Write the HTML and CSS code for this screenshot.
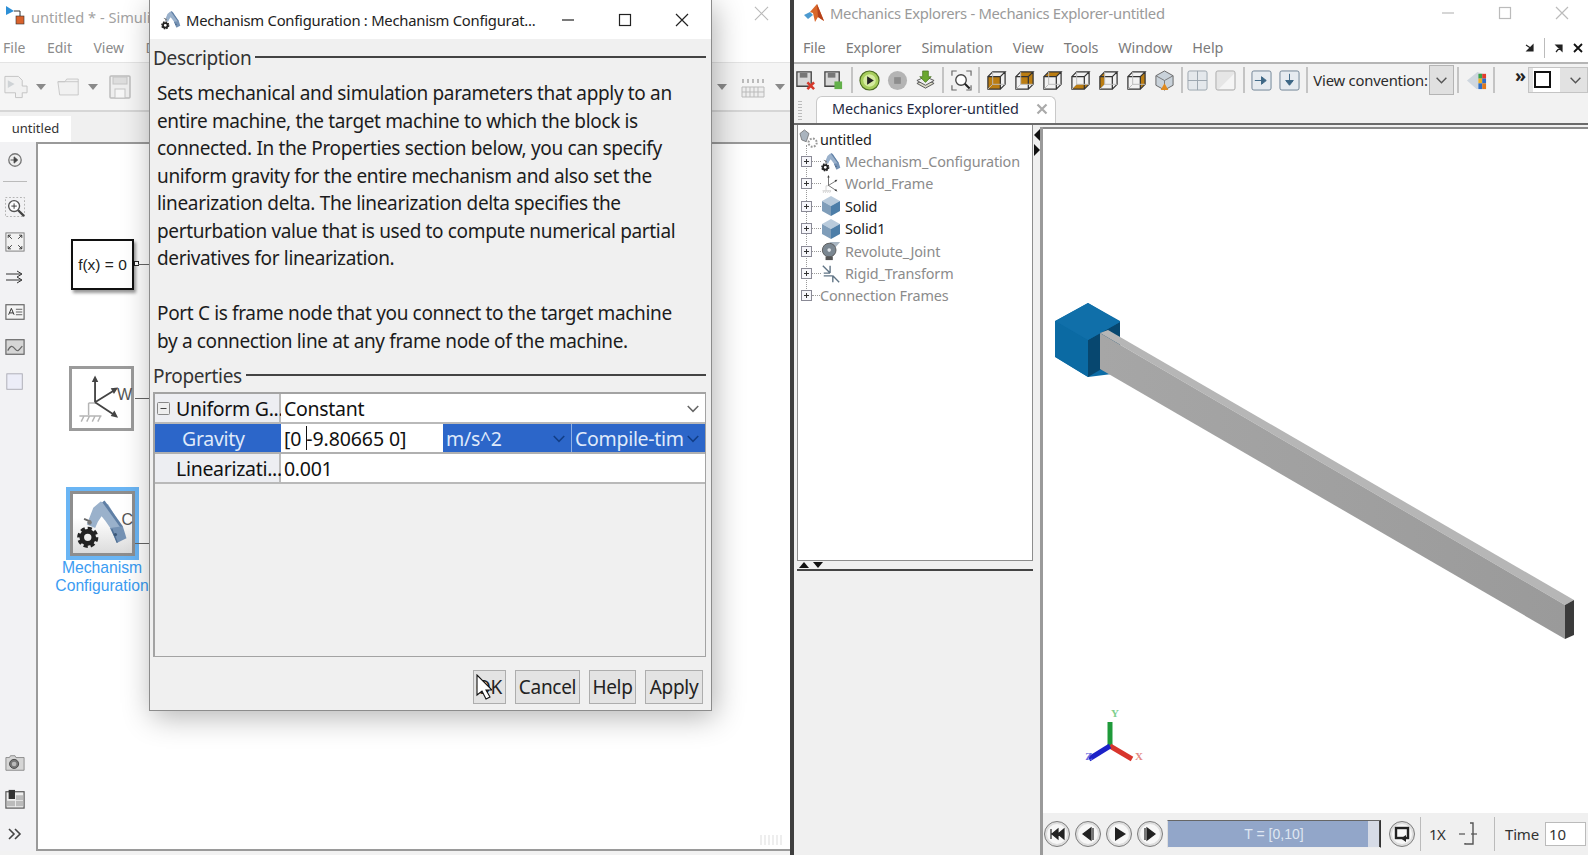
FILE: index.html
```html
<!DOCTYPE html>
<html lang="en">
<head>
<meta charset="utf-8">
<title>Mechanism Configuration</title>
<link rel="stylesheet" href="styles.css">
</head>
<body>
<svg class="defs" width="0" height="0" aria-hidden="true">
  <defs>
    <symbol id="robot" viewBox="0 0 64 64">
      <path d="M22 15l8-7 8 3 15 25-9 6-9-13-4-5-4 6-3 7-9-4z" fill="#9ab1cb"/>
      <path d="M33 8l20 28" stroke="#5f7fa5" stroke-width="3" fill="none"/>
      <path d="M40 37l14-2 4 13-10 5z" fill="#7592b4"/>
      <path d="M42 38l6 15" stroke="#4f6f94" stroke-width="1.500"/>
      <circle cx="46" cy="44" r="1.800" fill="#3e5a7a"/>
      <path d="M12 27l7 3" stroke="#666" stroke-width="2"/>
      <circle cx="18" cy="31" r="2.400" fill="#777"/>
      <circle cx="16" cy="47" r="6.500" fill="none" stroke="#222" stroke-width="5"/>
      <circle cx="16" cy="47" r="9.500" fill="none" stroke="#222" stroke-width="4" stroke-dasharray="4.400 3"/>
    </symbol>
    <symbol id="frame" viewBox="0 0 64 64">
      <path d="M18 37H25V36M18 37V50" fill="none" stroke="#b5b5b5" stroke-width="1.600"/>
      <path d="M8 51H32M10 57l3-6M16 57l3-6M22 57l3-6M28 57l3-6" fill="none" stroke="#b5b5b5" stroke-width="1.600"/>
      <path d="M25 36V12M25 36L46 23M25 36L46 50" fill="none" stroke="#444" stroke-width="2"/>
      <path d="M25 7l-3.500 7h7zM50 20l-8 1 3.500 6zM50 53l-4-8-4 6z" fill="#444"/>
    </symbol>
    <symbol id="cube" viewBox="0 0 20 20">
      <path d="M10 0l9 5-9 5-9-5z" fill="#b9cbdc"/>
      <path d="M1 5l9 5v10l-9-5z" fill="#7f9db9"/>
      <path d="M19 5l-9 5v10l9-5z" fill="#4d7ea8"/>
    </symbol>
    <symbol id="plus" viewBox="0 0 11 11">
      <rect x=".5" y=".5" width="10" height="10" fill="#f6f6fa" stroke="#8a8a96"/>
      <path d="M3 5.500h5M5.500 3v5" stroke="#333"/>
    </symbol>
    <symbol id="chev" viewBox="0 0 12 8">
      <path d="M1.500 1.500L6 6l4.500-4.500" fill="none" stroke="currentColor" stroke-width="1.300"/>
    </symbol>
    <symbol id="viewcube" viewBox="0 0 22 22">
      <path d="M2 7h13v13H2zM2 7l5-5h13l-5 5M15 20l5-5V2" fill="none" stroke="#333" stroke-width="1.300"/>
      <path d="M7 2v13h13M7 15l-5 5" fill="none" stroke="#bbb" stroke-width="1"/>
    </symbol>
    <symbol id="pip" viewBox="0 0 28 28">
      <circle cx="14" cy="14" r="12.500" fill="#dedede" stroke="#7d7d7d"/>
      <circle cx="14" cy="14" r="10" fill="#f7f7f7"/>
    </symbol>
  </defs>
</svg>

<main class="desktop">

  <section class="win sim">
    <header class="sim-title">
      <svg class="sim-logo" viewBox="0 0 20 20"><path d="M1 1v9l8-4z" fill="#2c8fd6"/><path d="M9 6h6v5" fill="none" stroke="#333"/><rect x="11" y="11" width="8" height="8" fill="#d9622b" stroke="#333" stroke-width=".6"/></svg>
      <span class="sim-name">untitled * - Simulink</span>
      <svg class="sim-close" viewBox="0 0 16 16"><path d="M1 1l14 14M15 1L1 15" stroke="#b9b9b9" stroke-width="1.200"/></svg>
    </header>
    <nav class="sim-menu"><span>File</span><span>Edit</span><span>View</span><span class="menu-cut">Display</span></nav>
    <div class="sim-tools">
      <svg class="ti t-new" viewBox="0 0 26 26"><path d="M2 2h14l4 4v6h5v7h-5v5h-7v-5H2z" fill="#f1f1f1" stroke="#c4c4c4"/><path d="M5 6v8l7-4z" fill="#cfd3d6"/></svg>
      <span class="drop"></span>
      <svg class="ti t-open" viewBox="0 0 26 22"><path d="M1 5h8l2-3h13v18H3z" fill="#f1f1f1" stroke="#c4c4c4"/><path d="M1 5h23" stroke="#c4c4c4"/></svg>
      <span class="drop"></span>
      <svg class="ti t-save" viewBox="0 0 22 24"><rect x="1" y="1" width="20" height="22" rx="1" fill="#eee" stroke="#bdbdbd" stroke-width="1.500"/><rect x="4" y="2" width="14" height="7" fill="#ddd" stroke="#c4c4c4"/><rect x="6" y="14" width="10" height="9" fill="#f6f6f6" stroke="#c4c4c4"/></svg>
      <span class="sim-spacer"></span>
      <span class="drop"></span>
      <svg class="ti t-grid" viewBox="0 0 24 24"><path d="M2 4v4M7 4v4M12 4v4M17 4v4M22 4v4" stroke="#bbb" stroke-width="2"/><path d="M1 12h22v10H1zM5 12v10M9 12v10M13 12v10M17 12v10M1 17h22" fill="#eee" stroke="#bbb"/></svg>
      <span class="drop drop-last"></span>
    </div>
    <div class="sim-tabs"><span class="sim-tab">untitled</span></div>
    <div class="sim-body">
      <aside class="palette">
        <svg class="pi p-first" viewBox="0 0 18 18"><circle cx="9" cy="9" r="7" fill="#eee" stroke="#777" stroke-width="1.500"/><path d="M4 9h6M8 5.500L12 9l-4 3.500z" fill="#444" stroke="#444"/></svg>
        <span class="pal-sep"></span>
        <svg class="pi" viewBox="0 0 22 22"><rect x=".5" y=".5" width="21" height="21" fill="none" stroke="#aaa" stroke-dasharray="2 2"/><circle cx="10" cy="10" r="6" fill="#fff" stroke="#555" stroke-width="1.500"/><path d="M7 10h6M10 7v6" stroke="#333"/><path d="M14.500 14.500L21 21" stroke="#444" stroke-width="2.500"/></svg>
        <svg class="pi" viewBox="0 0 22 22"><rect x="1" y="1" width="20" height="20" fill="#f2f2f2" stroke="#777"/><path d="M3.500 3.500l4 4M3.500 3.500h3M3.500 3.500v3M18.500 3.500l-4 4M18.500 3.500h-3M18.500 3.500v3M3.500 18.500l4-4M3.500 18.500h3M3.500 18.500v-3M18.500 18.500l-4-4M18.500 18.500h-3M18.500 18.500v-3" fill="none" stroke="#333"/></svg>
        <svg class="pi" viewBox="0 0 20 20"><path d="M1 7h15M12 4l5 3-5 3M1 13h15M12 10l5 3-5 3" fill="none" stroke="#333"/></svg>
        <svg class="pi" viewBox="0 0 22 22"><rect x="1" y="3" width="20" height="16" fill="#f4f4f4" stroke="#666" stroke-width="1.300"/><path d="M4 14l3-7 3 7M5.200 12h3.600" fill="none" stroke="#222"/><path d="M12 8h7M12 11h7M12 14h7" stroke="#555"/></svg>
        <svg class="pi" viewBox="0 0 22 22"><rect x="1" y="3" width="20" height="16" fill="#d6d6d6" stroke="#666" stroke-width="1.300"/><path d="M3 15c3-6 5-6 8-2s4 2 8-3" fill="none" stroke="#666" stroke-width="1.300"/></svg>
        <svg class="pi" viewBox="0 0 22 22"><rect x="2" y="2" width="17" height="17" fill="#ecedf8" stroke="#a9a9b2"/></svg>
        <span class="pal-fill"></span>
        <svg class="pi p-cam" viewBox="0 0 22 18"><path d="M1 3h4l1-2h5l1 2h9v14H1z" fill="#d5d5d5" stroke="#888"/><circle cx="10" cy="10" r="5" fill="#777" stroke="#444"/><circle cx="10" cy="10" r="2.500" fill="#bbb"/></svg>
        <svg class="pi p-lay" viewBox="0 0 22 22"><rect x="1" y="3" width="20" height="18" fill="#eee" stroke="#555" stroke-width="1.300"/><rect x="4" y="1" width="7" height="10" fill="#333"/><path d="M12 7h8v5h-8zM12 13h8v6h-8zM2 13h9v6H2z" fill="#bbb"/></svg>
        <svg class="pi p-chev" viewBox="0 0 14 12"><path d="M1 1l5 5-5 5M7 1l5 5-5 5" fill="none" stroke="#444" stroke-width="1.600"/></svg>
      </aside>
      <div class="canvas">
        <div class="block block-fx">f(x) = 0<i class="port"></i></div>
        <i class="wire wire-fx"></i>
        <div class="block block-world"><svg class="blk-icon"><use href="#frame"/></svg><span class="blk-port">W</span></div>
        <i class="wire wire-world"></i>
        <div class="block block-mech"><svg class="blk-icon"><use href="#robot"/></svg><span class="blk-port">C</span></div>
        <i class="wire wire-mech"></i>
        <div class="blk-label">Mechanism<br>Configuration</div>
        <i class="grip"></i>
      </div>
    </div>
  </section>

  <section class="win dialog">
    <header class="dlg-title">
      <svg class="dlg-logo" viewBox="4 4 56 56"><use href="#robot" width="64" height="64"/></svg>
      <span class="dlg-name">Mechanism Configuration : Mechanism Configurat...</span>
      <div class="dlg-btns">
        <svg viewBox="0 0 14 14"><path d="M1 7h12" stroke="#222" stroke-width="1.200"/></svg>
        <svg viewBox="0 0 14 14"><rect x="1.500" y="1.500" width="11" height="11" fill="none" stroke="#222" stroke-width="1.200"/></svg>
        <svg viewBox="0 0 14 14"><path d="M1 1l12 12M13 1L1 13" stroke="#222" stroke-width="1.200"/></svg>
      </div>
    </header>
    <div class="dlg-body">
      <div class="legend legend-d"><span>Description</span><i></i></div>
      <p class="desc">Sets mechanical and simulation parameters that apply to an<br>entire machine, the target machine to which the block is<br>connected. In the Properties section below, you can specify<br>uniform gravity for the entire mechanism and also set the<br>linearization delta. The linearization delta specifies the<br>perturbation value that is used to compute numerical partial<br>derivatives for linearization.<br><br>Port C is frame node that you connect to the target machine<br>by a connection line at any frame node of the machine.</p>
      <div class="legend legend-p"><span>Properties</span><i></i></div>
      <div class="ptable">
        <div class="prow">
          <div class="plabel"><svg class="minus" viewBox="0 0 13 13"><rect x=".5" y=".5" width="12" height="12" rx="1" fill="#eee" stroke="#888"/><path d="M3.500 6.500h6" stroke="#444"/></svg>Uniform G...</div>
          <div class="pval pval-fill">Constant<svg class="pchev"><use href="#chev"/></svg></div>
        </div>
        <div class="prow prow-sel">
          <div class="plabel plabel-sel">Gravity</div>
          <div class="pval pval-edit">[0 <i class="caret"></i>-9.80665 0]</div>
          <div class="pval pval-unit">m/s^2<svg class="pchev"><use href="#chev"/></svg></div>
          <div class="pval pval-comp">Compile-tim<svg class="pchev"><use href="#chev"/></svg></div>
        </div>
        <div class="prow">
          <div class="plabel plabel-in">Linearizati...</div>
          <div class="pval pval-fill">0.001</div>
        </div>
      </div>
      <div class="dlg-actions">
        <button class="btn btn-ok">OK</button>
        <button class="btn btn-cancel">Cancel</button>
        <button class="btn btn-help">Help</button>
        <button class="btn btn-apply">Apply</button>
      </div>
    </div>
    <svg class="pointer" viewBox="0 0 16 26"><path d="M1 1v20l5-4 4 8 4-2-4-7h6z" fill="#fff" stroke="#111" stroke-width="1.100"/></svg>
  </section>

  <section class="win explorer">
    <header class="ex-title">
      <svg class="ex-logo" viewBox="0 0 22 22"><path d="M1 12l6-3 3 3-5 4z" fill="#4c9ad0"/><path d="M7 9l7-8 7 17-6-4-3 5-2-9z" fill="#d9672a"/><path d="M14 1l7 17-6-4z" fill="#b5401a"/></svg>
      <span class="ex-name">Mechanics Explorers - Mechanics Explorer-untitled</span>
      <div class="ex-btns">
        <svg viewBox="0 0 14 14"><path d="M1 7h12" stroke="#bbb" stroke-width="1.200"/></svg>
        <svg viewBox="0 0 14 14"><rect x="1.500" y="1.500" width="11" height="11" fill="none" stroke="#bbb" stroke-width="1.200"/></svg>
        <svg viewBox="0 0 14 14"><path d="M1 1l12 12M13 1L1 13" stroke="#bbb" stroke-width="1.200"/></svg>
      </div>
    </header>
    <nav class="ex-menu">
      <span>File</span><span>Explorer</span><span>Simulation</span><span>View</span><span>Tools</span><span>Window</span><span>Help</span>
      <div class="ex-dock">
        <svg viewBox="0 0 10 10"><path d="M1 2l6 4M8 2v6H2z" fill="#222" stroke="#222" stroke-width="1.200"/></svg>
        <i></i>
        <svg viewBox="0 0 10 10"><path d="M2 9l5-6M2 2h6v6z" fill="#222" stroke="#222" stroke-width="1.200"/></svg>
        <svg viewBox="0 0 10 10"><path d="M1 1l8 8M9 1L1 9" stroke="#111" stroke-width="1.800"/></svg>
      </div>
    </nav>
    <div class="ex-tools">
      <span class="xi xi-first"><svg viewBox="0 0 22 22"><path d="M2 2h15v15H2z" fill="#d8d8d8" stroke="#444" stroke-width="1.400"/><rect x="5" y="3" width="8" height="5" fill="#777"/><path d="M13 13l7 7M20 13l-7 7" stroke="#d6392b" stroke-width="2.600"/></svg></span>
      <span class="xi"><svg viewBox="0 0 22 22"><path d="M2 2h15v15H2z" fill="#d8d8d8" stroke="#444" stroke-width="1.400"/><rect x="5" y="3" width="8" height="5" fill="#777"/><rect x="12" y="12" width="8" height="8" fill="#63b04a"/></svg></span>
      <i class="xsep"></i>
      <span class="xi"><svg viewBox="0 0 22 22"><circle cx="11" cy="11" r="10" fill="#a8cf5d" stroke="#4d6d22" stroke-width="1.200"/><circle cx="11" cy="11" r="6.500" fill="#d6eba1"/><path d="M8.500 6.500l7 4.500-7 4.500z" fill="#222"/></svg></span>
      <span class="xi"><svg viewBox="0 0 22 22"><circle cx="11" cy="11" r="10" fill="#b4b4b4"/><rect x="7.500" y="7.500" width="7" height="7" fill="#8d8d8d"/></svg></span>
      <span class="xi"><svg viewBox="0 0 22 22"><path d="M2 14l9-4 9 4-9 5z" fill="#dcdcc8" stroke="#555"/><path d="M2 11l9-4 9 4-9 5z" fill="#eee" stroke="#555"/><path d="M8 1h6v6h3l-6 6-6-6h3z" fill="#6aa72f" stroke="#3f6b18" stroke-width=".7"/></svg></span>
      <i class="xsep"></i>
      <span class="xi"><svg viewBox="0 0 22 22"><path d="M1 6V1h5M21 6V1h-5M1 16v5h5M21 16v5h-5" fill="none" stroke="#666" stroke-width="1.200"/><circle cx="10.500" cy="10.500" r="5.500" fill="#fff" stroke="#444" stroke-width="1.400"/><path d="M14.500 14.500l5 5" stroke="#222" stroke-width="2.200"/></svg></span>
      <i class="xsep"></i>
      <span class="xi"><svg viewBox="0 0 22 22"><path d="M2 7h13v13H2z" fill="#bb7d12"/><use href="#viewcube"/></svg></span>
      <span class="xi"><svg viewBox="0 0 22 22"><path d="M7 2h13v13H7z" fill="#bb7d12"/><use href="#viewcube"/></svg></span>
      <span class="xi"><svg viewBox="0 0 22 22"><path d="M2 7l5-5h13l-5 5z" fill="#bb7d12"/><use href="#viewcube"/></svg></span>
      <span class="xi"><svg viewBox="0 0 22 22"><path d="M2 20l5-5h13l-5 5z" fill="#bb7d12"/><use href="#viewcube"/></svg></span>
      <span class="xi"><svg viewBox="0 0 22 22"><path d="M2 7l5-5v13l-5 5z" fill="#bb7d12"/><use href="#viewcube"/></svg></span>
      <span class="xi"><svg viewBox="0 0 22 22"><path d="M15 7l5-5v13l-5 5z" fill="#bb7d12"/><use href="#viewcube"/></svg></span>
      <span class="xi"><svg viewBox="0 0 22 22"><path d="M11 1l9 5v10l-9 5-9-5V6z" fill="#c9d2da" stroke="#666"/><path d="M2 6l9 5 9-5M11 11v10" fill="none" stroke="#777"/><path d="M7 21l4-7 4 7z" fill="#e08a1e"/></svg></span>
      <i class="xsep xsep-n"></i>
      <span class="xi"><svg viewBox="0 0 22 22"><rect x="1" y="1" width="20" height="20" rx="2" fill="#e4e8ec" stroke="#9aa5ae"/><path d="M11 1v20M1 11h20" stroke="#9aa5ae"/></svg></span>
      <span class="xi"><svg viewBox="0 0 22 22"><rect x="1" y="1" width="20" height="20" rx="2" fill="#e6e6e6" stroke="#aaa"/><path d="M20 20L4 20 20 4z" fill="#f5f5f5"/></svg></span>
      <i class="xsep"></i>
      <span class="xi"><svg viewBox="0 0 22 22"><rect x="1" y="1" width="20" height="20" rx="2" fill="#e6ebf0" stroke="#6f8294"/><path d="M4 11h11M11 7l5 4-5 4z" fill="#3d6785" stroke="#3d6785"/></svg></span>
      <span class="xi"><svg viewBox="0 0 22 22"><rect x="1" y="1" width="20" height="20" rx="2" fill="#e6ebf0" stroke="#6f8294"/><path d="M11 4v11M7 11l4 5 4-5z" fill="#3d6785" stroke="#3d6785"/></svg></span>
      <i class="xsep"></i>
      <span class="x-label">View convention:</span>
      <span class="x-combo"><svg class="x-chev"><use href="#chev"/></svg></span>
      <i class="xsep"></i>
      <span class="xi xi-pal"><svg viewBox="0 0 22 22"><path d="M1 11L12 2l9 3v15H11z" fill="#cfd7df"/><path d="M13 4h4v5h-4z" fill="#3aa24a"/><path d="M17 4h4v5h-4z" fill="#e23c2c"/><path d="M13 9h4v5h-4z" fill="#f0b020"/><path d="M17 9h4v5h-4z" fill="#2e6fc8"/><path d="M13 14h4v6h-4z" fill="#2e6fc8"/><path d="M17 14h4v6h-4z" fill="#e07a1e"/></svg></span>
      <i class="xsep"></i>
      <span class="x-more">»</span>
      <span class="x-layout"><b></b><svg class="x-chev"><use href="#chev"/></svg></span>
    </div>
    <div class="ex-tabs">
      <i class="tab-grip"></i>
      <div class="ex-tab">Mechanics Explorer-untitled<svg class="tab-x" viewBox="0 0 12 12"><path d="M1.500 1.500l9 9M10.500 1.500l-9 9" stroke="#aaa" stroke-width="2.200"/></svg></div>
    </div>
    <div class="ex-main">
      <div class="ex-left">
        <ul class="tree">
          <li class="node node-root"><svg class="n-icon" viewBox="0 0 22 22"><path d="M1 5l5-4 5 4-3 9-5-2z" fill="#aab4be" stroke="#666" stroke-width=".8"/><circle cx="15" cy="15" r="4.500" fill="none" stroke="#999" stroke-width="2.200" stroke-dasharray="2 1.500"/></svg><span class="n-dark">untitled</span></li>
          <li class="node"><svg class="n-plus"><use href="#plus"/></svg><i class="n-dots"></i><svg class="n-icon" viewBox="4 4 56 56"><use href="#robot" width="64" height="64"/></svg><span>Mechanism_Configuration</span></li>
          <li class="node"><svg class="n-plus"><use href="#plus"/></svg><i class="n-dots"></i><svg class="n-icon" viewBox="4 4 56 56"><use href="#frame" width="64" height="64"/></svg><span>World_Frame</span></li>
          <li class="node"><svg class="n-plus"><use href="#plus"/></svg><i class="n-dots"></i><svg class="n-icon"><use href="#cube"/></svg><span class="n-dark">Solid</span></li>
          <li class="node"><svg class="n-plus"><use href="#plus"/></svg><i class="n-dots"></i><svg class="n-icon"><use href="#cube"/></svg><span class="n-dark">Solid1</span></li>
          <li class="node"><svg class="n-plus"><use href="#plus"/></svg><i class="n-dots"></i><svg class="n-icon" viewBox="0 0 22 22"><path d="M9 1h12l-5 6z" fill="#a9b6c2"/><circle cx="9" cy="10" r="7.500" fill="#7b8791" stroke="#555"/><circle cx="9" cy="10" r="2" fill="#dfe5ea"/><path d="M5 17h8v4H5z" fill="#555"/></svg><span>Revolute_Joint</span></li>
          <li class="node"><svg class="n-plus"><use href="#plus"/></svg><i class="n-dots"></i><svg class="n-icon" viewBox="0 0 22 22"><path d="M2 2l8 8M10 10V2M10 10H3M13 13l7 7M13 13v7M13 13H3" fill="none" stroke="#5f7384" stroke-width="1.500"/></svg><span>Rigid_Transform</span></li>
          <li class="node node-last"><svg class="n-plus"><use href="#plus"/></svg><i class="n-dots"></i><span>Connection Frames</span></li>
        </ul>
        <div class="h-sash"><i class="tri-up"></i><i class="tri-down"></i></div>
        <div class="h-panel"></div>
      </div>
      <div class="v-sash"><i class="tri-left"></i><i class="tri-right"></i></div>
      <div class="viewer">
        <div class="render">
          <svg class="scene" viewBox="1043 129 545 684">
            <defs>
              <linearGradient id="barSide" x1="0" y1="0" x2="1" y2="0"><stop offset="0" stop-color="#a6a6a6"/><stop offset="1" stop-color="#9a9a9a"/></linearGradient>
            </defs>
            <path d="M1088 303l32 18v52l-32 4-33-20v-36z" fill="#0c6ca6"/>
            <path d="M1055.500 321l32.500 19v37l-32.500-20z" fill="#0b6aa3"/>
            <path d="M1088 340l32-18v36l-32 19z" fill="#07476f"/>
            <path d="M1088 303l32 19-32 18-32.500-19z" fill="#106fa9"/>
            <path d="M1100 333l8-3 466 270-9 5z" fill="#b6b6b6"/>
            <path d="M1100 333l465 272v34l-465-270z" fill="url(#barSide)"/>
            <path d="M1565 605l9-5v35l-9 4z" fill="#3b3b3b"/>
            <g class="axes">
              <path d="M1110 746V722" stroke="#1f9a3a" stroke-width="5"/>
              <path d="M1110 746L1132 759" stroke="#d8352c" stroke-width="5"/>
              <path d="M1110 746L1089 759" stroke="#1c22c8" stroke-width="5"/>
              <text class="ax ax-y" x="1115" y="717">Y</text>
              <text class="ax ax-x" x="1139" y="760">X</text>
              <text class="ax ax-z" x="1089" y="760">Z</text>
            </g>
          </svg>
        </div>
        <div class="playbar">
          <svg class="pb" viewBox="0 0 28 28"><use href="#pip"/><path d="M8 9v10M15 9l-6 5 6 5zM21 9l-6 5 6 5z" fill="#222" stroke="#222" stroke-width="1.200"/></svg>
          <svg class="pb" viewBox="0 0 28 28"><use href="#pip"/><path d="M17 8l-8 6 8 6zM19 8v12" fill="#222" stroke="#222" stroke-width="1.200"/></svg>
          <svg class="pb" viewBox="0 0 28 28"><use href="#pip"/><path d="M10 7l11 7-11 7z" fill="#222"/></svg>
          <svg class="pb" viewBox="0 0 28 28"><use href="#pip"/><path d="M11 8l8 6-8 6zM9 8v12" fill="#222" stroke="#222" stroke-width="1.200"/></svg>
          <div class="timeline"><span class="tl-text">T = [0,10]</span><i class="tl-thumb"></i></div>
          <svg class="pb pb-loop" viewBox="0 0 28 28"><use href="#pip"/><rect x="8" y="8" width="12" height="10" fill="none" stroke="#222" stroke-width="2.400"/><path d="M18 15l-5 3.500 5 3.500z" fill="#222"/></svg>
          <i class="pb-sep"></i>
          <span class="pb-speed">1X</span>
          <svg class="pb-slider" viewBox="0 0 20 24"><path d="M1 12h6M13 12h6" stroke="#333"/><path d="M12 1h3v21H7v-1" fill="none" stroke="#555" stroke-width="1.400"/></svg>
          <i class="pb-sep pb-sep2"></i>
          <span class="pb-time">Time</span>
          <span class="pb-input">10</span>
        </div>
      </div>
    </div>
  </section>

</main>
</body>
</html>
```

FILE: styles.css
```css
* { box-sizing: border-box; }
html, body { margin: 0; padding: 0; height: 100%; overflow: hidden; background: #f0f0f0; }
.defs { position: absolute; }
.desktop { position: relative; width: 1588px; height: 855px; overflow: hidden; font-family: "Noto Sans", "Liberation Sans", sans-serif; }
.win { position: absolute; top: 0; display: flex; flex-direction: column; }

/* Simulink window */
.sim { left: 0; width: 790px; height: 855px; background: #f2f2f2; }
.sim-title { height: 33px; display: flex; align-items: center; background: #fff; flex: none; }
.sim-logo { width: 20px; height: 20px; margin: 0 6px 4px 5px; flex: none; }
.sim-name { font-size: 14.600px; color: #a2a2a2; width: 200px; white-space: nowrap; }
.sim-close { width: 15px; height: 15px; margin-left: 523px; margin-top: -6px; }
.sim-menu { height: 29px; display: flex; gap: 21.500px; align-items: center; padding-left: 3px; background: #fff; font-size: 14px; color: #8b8b8b; flex: none; }
.menu-cut { width: 5px; overflow: hidden; white-space: nowrap; }
.sim-tools { height: 50px; display: flex; align-items: center; background: #f5f5f5; border-top: 1px solid #e4e4e4; border-bottom: 2px solid #d6d6d6; flex: none; }
.ti { flex: none; }
.t-new { width: 25px; height: 26px; margin-left: 3px; }
.t-open { width: 23px; height: 22px; margin-left: 11px; }
.t-save { width: 22px; height: 24px; margin-left: 11px; }
.drop { width: 0; height: 0; border: 5px solid transparent; border-top: 6px solid #8a8a8a; border-bottom: 0; margin-left: 8px; }
.sim-spacer { width: 578px; }
.t-grid { width: 24px; height: 24px; margin-left: 14px; }
.drop-last { margin-left: 10px; }
.sim-tabs { height: 30px; background: #f0f0f0; display: flex; align-items: flex-end; flex: none; }
.sim-tab { width: 71px; height: 26px; background: #fff; font-size: 13px; color: #333; display: flex; align-items: center; justify-content: center; padding-bottom: 2px; }
.sim-body { flex: 1; display: flex; min-height: 0; padding-bottom: 4px; }
.palette { width: 36px; flex: none; display: flex; flex-direction: column; align-items: center; padding-right: 6px; padding-top: 10px; background: #f2f2f4; }
.pi { width: 20px; height: 20px; flex: none; margin-bottom: 15px; }
.p-first { width: 16px; height: 16px; margin-bottom: 13px; }
.pal-sep { width: 24px; height: 1px; background: #bbb; margin-bottom: 15px; flex: none; }
.pal-fill { flex: 1; }
.p-cam { margin-bottom: 16px; }
.p-lay { margin-bottom: 19px; }
.p-chev { width: 14px; height: 12px; margin-bottom: 11px; }
.canvas { flex: 1; position: relative; background: #fff; border: 2px solid #9a9a9a; border-right: 0; }
.block { position: absolute; background: #fff; }
.block-fx { left: 33px; top: 95px; width: 63px; height: 51px; border: 2px solid #111; box-shadow: 2px 3px 3px #999; display: flex; align-items: center; justify-content: center; font: 15.500px "Liberation Sans", sans-serif; color: #222; }
.port { position: absolute; right: -7px; top: 20px; width: 5px; height: 5px; border: 1px solid #222; background: #fff; }
.wire { position: absolute; height: 1px; background: #666; left: 97px; width: 22px; }
.wire-fx { top: 120px; left: 100px; }
.wire-world { top: 254px; }
.wire-mech { top: 399px; }
.block-world { left: 31px; top: 222px; width: 65px; height: 65px; border: 3px solid #9b9b9b; }
.block-mech { left: 32px; top: 347px; width: 65px; height: 65px; border: 3px solid #8e8e8e; outline: 4px solid #6ab5f4; background: linear-gradient(#fff 40%, #dcdcdc); }
.blk-icon { position: absolute; inset: 0; width: 59px; height: 59px; }
.blk-port { position: absolute; right: -1px; top: 17px; font: 16px "Liberation Sans", sans-serif; color: #555; }
.blk-label { position: absolute; left: 8px; top: 415px; width: 112px; text-align: center; font: 15.700px/18px "Liberation Sans", sans-serif; color: #3b9cf2; }
.grip { position: absolute; right: 8px; bottom: 4px; width: 22px; height: 10px; background: repeating-linear-gradient(90deg, #eee 0 2px, #fff 2px 4px); }

/* Dialog */
.dialog { left: 149px; width: 563px; height: 711px; background: #f0f0f0; border: 1px solid #8c8c8c; border-top: 0; box-shadow: 3px 6px 28px rgba(0,0,0,.3); }
.dlg-title { height: 39px; flex: none; display: flex; align-items: center; background: #fff; padding-left: 11px; }
.dlg-logo { width: 20px; height: 20px; flex: none; margin-right: 5px; }
.dlg-name { font-size: 14.800px; color: #222; white-space: nowrap; flex: 1; letter-spacing: -.25px; }
.dlg-btns { display: flex; gap: 43px; padding-right: 22px; }
.dlg-btns svg { width: 14px; height: 14px; }
.dlg-body { flex: 1; display: flex; flex-direction: column; padding: 6px 5px 0 3px; min-height: 0; }
.legend { display: flex; align-items: center; gap: 4px; font-size: 19px; color: #333; letter-spacing: -.35px; height: 26px; flex: none; }
.legend i { flex: 1; height: 2px; background: #444; margin-top: -3px; }
.legend-p { margin-top: 8px; }
.desc { margin: 9px 0 0 4px; font-size: 19px; line-height: 27.500px; color: #1c1c1c; letter-spacing: -.35px; white-space: nowrap; flex: none; }
.ptable { margin-top: 3px; height: 265px; flex: none; border: 2px solid #a3a3a3; border-right-width: 1px; border-bottom-width: 1px; font-size: 19.500px; letter-spacing: -.3px; background: #f0f0f0; }
.prow { display: flex; height: 30px; border-bottom: 2px solid #b9b9b9; color: #111; }
.plabel { width: 126px; flex: none; display: flex; align-items: center; background: #edeef2; border-right: 2px solid #bcbcbc; padding-left: 2px; white-space: nowrap; }
.minus { width: 13px; height: 13px; margin-right: 6px; flex: none; }
.plabel-in { padding-left: 21px; }
.plabel-sel { background: #2c66c9; color: #dfe9fa; padding-left: 27px; border-right: 0; }
.prow-sel { border-bottom-color: #b0b0b0; }
.pval { display: flex; align-items: center; padding-left: 3px; position: relative; background: #fff; white-space: pre; }
.pval-fill { flex: 1; }
.pval-edit { width: 162px; flex: none; letter-spacing: -.1px; }
.pval-unit { width: 129px; flex: none; background: #2c66c9; color: #dfe9fa; border-right: 1px solid #8fb0e4; }
.pval-comp { flex: 1; background: #2c66c9; color: #dfe9fa; overflow: hidden; }
.pchev { position: absolute; right: 5px; top: 10px; width: 14px; height: 10px; color: #666; }
.pval-unit .pchev, .pval-comp .pchev { color: #123e87; }
.caret { width: 1px; height: 24px; background: #111; margin-right: -1px; flex: none; }
.dlg-actions { display: flex; justify-content: flex-end; padding: 13px 3px 0 0; gap: 9px; }
.btn { height: 34px; padding: 0; font: 19px "Noto Sans", sans-serif; letter-spacing: -.3px; color: #222; background: #e3e3e3; border: 1px solid #adadad; }
.btn-ok { width: 33px; text-align: right; padding-right: 3px; }
.btn-cancel { width: 65px; }
.btn-help { width: 47px; }
.btn-apply { width: 58px; }
.pointer { position: absolute; left: 326px; top: 674px; width: 16px; height: 26px; }

/* Mechanics Explorer */
.explorer { left: 790px; width: 798px; height: 855px; background: #f0f0f0; border-left: 4px solid #3f3f3f; }
.ex-title { height: 31px; flex: none; display: flex; align-items: center; background: #fff; padding-left: 9px; }
.ex-logo { width: 22px; height: 22px; flex: none; margin-bottom: 4px; }
.ex-name { font-size: 14.800px; color: #9a9a9a; margin-left: 5px; margin-bottom: 5px; white-space: nowrap; flex: 1; letter-spacing: -.3px; }
.ex-btns { display: flex; gap: 43px; padding-right: 19px; margin-bottom: 5px; }
.ex-btns svg { width: 14px; height: 14px; }
.ex-menu { height: 33px; flex: none; display: flex; align-items: center; padding: 2px 0 0 9px; background: #fff; border-bottom: 2px solid #b5b5b5; font-size: 14.400px; color: #7a7a7a; gap: 20px; letter-spacing: -.1px; }
.ex-dock { margin-left: auto; display: flex; align-items: center; gap: 9px; padding-right: 5px; }
.ex-dock svg { width: 10px; height: 10px; flex: none; }
.ex-dock i { width: 1px; height: 20px; background: #bbb; }
.ex-tools { height: 32px; flex: none; display: flex; align-items: center; background: #f2f2f2; }
.xi { width: 27.850px; height: 24px; flex: none; display: flex; align-items: center; justify-content: center; }
.xi-first { margin-left: -2px; }
.xi svg { width: 21px; height: 21px; }
.xsep { width: 8px; height: 26px; flex: none; position: relative; }
.xsep::after { content: ""; position: absolute; left: 3px; top: 0; width: 2px; height: 26px; background: #c4c4c4; }
.xsep-n { width: 6px; }
.x-label { font-size: 14.800px; color: #2c2c2c; white-space: nowrap; width: 118px; letter-spacing: -.2px; margin-left: 2px; }
.x-combo { width: 25px; height: 30px; flex: none; background: #e0e0e0; border: 1px solid #b4b4b4; color: #555; display: flex; align-items: center; justify-content: center; }
.x-chev { width: 13px; height: 9px; }
.xi-pal { width: 28px; }
.x-more { font-size: 18px; font-weight: 700; color: #222; width: 25px; text-align: center; margin: -10px -5px 0 10px; flex: none; }
.x-layout { width: 60px; height: 26px; flex: none; display: flex; align-items: center; justify-content: flex-end; padding-right: 5px; background: linear-gradient(90deg, #e2e2e2 4px, #fff 4px 31px, #e2e2e2 31px); border: 1px solid #c4c4c4; color: #555; position: relative; }
.x-layout b { position: absolute; left: 5px; top: 3px; width: 17px; height: 17px; background: #fff; border: 2px solid #111; }
.ex-tabs { height: 27px; flex: none; display: flex; align-items: flex-end; background: #f2f2f2; }
.tab-grip { width: 4px; height: 20px; margin: 0 14px 2px 4px; background: repeating-linear-gradient(#bbb 0 1px, #f2f2f2 1px 3px); }
.ex-tab { width: 240px; height: 27px; background: #fff; border: 1px solid #c9c9c9; border-bottom: 0; border-radius: 6px 6px 0 0; font-size: 14.400px; color: #1f2a44; display: flex; align-items: center; padding: 0 0 3px 15px; letter-spacing: -.08px; white-space: nowrap; }
.tab-x { width: 12px; height: 12px; margin-left: 17px; }
.ex-main { flex: 1; display: flex; min-height: 0; border-top: 2px solid #6a6a6a; padding-left: 3px; }
.ex-left { width: 236px; flex: none; display: flex; flex-direction: column; }
.tree { list-style: none; margin: 0; padding: 3px 0 0 3px; height: 436px; flex: none; background: #fff; border: 1px solid #8d8d8d; border-top: 0; position: relative; font-size: 14.400px; color: #8b8b8b; letter-spacing: -.12px; }
.tree::before { content: ""; position: absolute; left: 8px; top: 20px; height: 150px; border-left: 1px dotted #999; }
.node { height: 22.400px; display: flex; align-items: center; position: relative; }
.n-plus { width: 11px; height: 11px; flex: none; position: relative; }
.n-dots { width: 9px; border-top: 1px dotted #999; flex: none; }
.n-icon { width: 20px; height: 20px; margin-right: 4px; flex: none; }
.node-root .n-icon { margin: 0 1px 0 -2px; }
.node-last .n-dots { width: 8px; }
.n-dark { color: #1c1c1c; }
.h-sash { height: 10px; flex: none; display: flex; align-items: center; gap: 4px; padding-left: 2px; border-bottom: 2px solid #444; }
.tri-up { width: 0; height: 0; border: 5px solid transparent; border-bottom: 6px solid #111; border-top: 0; }
.tri-down { width: 0; height: 0; border: 5px solid transparent; border-top: 6px solid #111; border-bottom: 0; }
.h-panel { flex: 1; background: #f0f0f0; }
.v-sash { width: 7px; flex: none; padding: 4px 0 0 1px; display: flex; flex-direction: column; gap: 3px; }
.tri-left { width: 0; height: 0; border: 6px solid transparent; border-right: 6px solid #111; border-left: 0; }
.tri-right { width: 0; height: 0; border: 6px solid transparent; border-left: 6px solid #111; border-right: 0; }
.viewer { flex: 1; display: flex; flex-direction: column; min-width: 0; border-left: 3px solid #9a9a9a; margin-top: 2px; }
.render { flex: 1; background: #fff; position: relative; min-height: 0; border-top: 2px solid #8a8a8a; }
.scene { display: block; width: 100%; height: 100%; }
.ax { font: 700 11px "Liberation Serif", serif; }
.ax-y { fill: #7ecf8e; text-anchor: middle; }
.ax-x { fill: #e58a84; text-anchor: middle; }
.ax-z { fill: #6a6ee0; text-anchor: middle; }
.playbar { height: 42px; flex: none; display: flex; align-items: center; background: #f0f0f0; }
.pb { width: 28px; height: 28px; flex: none; margin-right: 3px; }
.timeline { width: 214px; height: 28px; flex: none; background: #92a6c9; border: 1px solid; border-color: #666 #333 #eee #ddd; position: relative; display: flex; align-items: center; justify-content: center; margin-right: 7px; }
.tl-text { color: #dfe6f2; font-size: 14px; font-family: "Liberation Sans", sans-serif; }
.tl-thumb { position: absolute; right: 0; top: 0; width: 12px; height: 26px; background: #d6dbe6; border-right: 1px solid #444; }
.pb-loop { margin-right: 4px; }
.pb-sep { width: 1px; height: 34px; background: #bbb; flex: none; margin: 0 8px 0 0; }
.pb-speed { font: 15px "Noto Sans", sans-serif; color: #333; width: 29px; letter-spacing: -.5px; }
.pb-slider { width: 20px; height: 24px; flex: none; margin-right: 16px; }
.pb-sep2 { margin-right: 10px; }
.pb-time { font-size: 15px; color: #333; width: 40px; letter-spacing: -.2px; }
.pb-input { width: 41px; height: 24px; flex: none; background: #fff; border: 1px solid #bbb; font-size: 15px; color: #333; padding-left: 3px; line-height: 22px; }
```
